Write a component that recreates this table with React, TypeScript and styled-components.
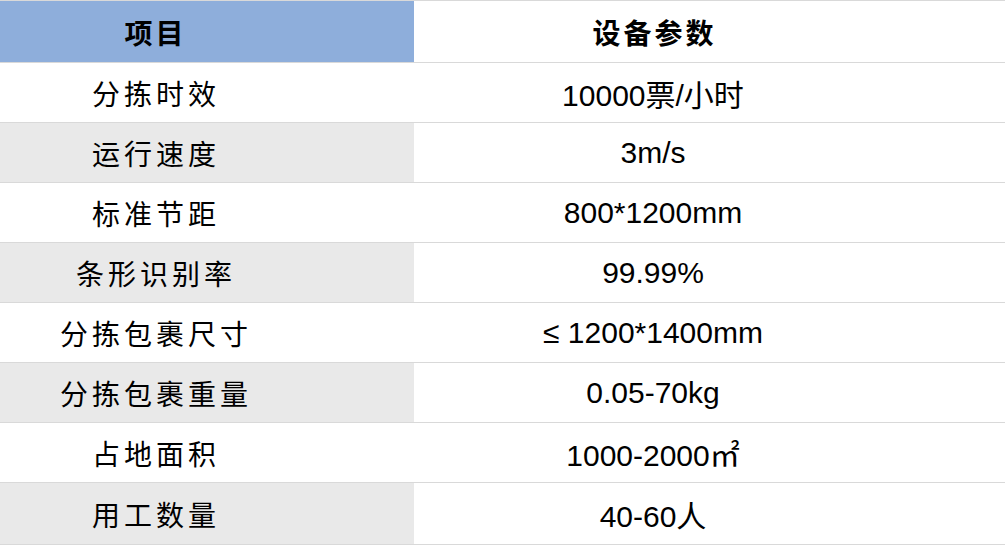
import React from "react";
import styled, { createGlobalStyle } from "styled-components";

const GlobalStyle = createGlobalStyle`
  html, body {
    margin: 0;
    padding: 0;
    background: #fff;
  }
  body {
    font-family: "Liberation Sans", "Noto Sans CJK SC", sans-serif;
    color: #000;
  }
`;

const Table = styled.div`
  width: 1005px;
  border-top: 1px solid #d9d9d9;
  display: flex;
  flex-direction: column;
`;

const Row = styled.div<{ $h: number }>`
  display: grid;
  grid-template-columns: 414px 1fr;
  height: ${(p) => p.$h}px;
  box-sizing: border-box;
  border-bottom: 1px solid #d9d9d9;
`;

// text in both columns sits left of the cell middle, as in the source sheet
const Label = styled.div<{ $bg: string; $head?: boolean }>`
  background: ${(p) => p.$bg};
  display: flex;
  align-items: center;
  justify-content: center;
  padding-right: 106px;
  font-family: "Noto Sans CJK SC", sans-serif;
  font-size: 28px;
  font-weight: ${(p) => (p.$head ? 700 : 400)};
  letter-spacing: ${(p) => (p.$head ? "3px" : "4px")};
  text-indent: ${(p) => (p.$head ? "3px" : "4px")};
`;

const Value = styled.div<{ $head?: boolean }>`
  background: #fff;
  display: flex;
  align-items: center;
  justify-content: center;
  padding-right: 113px;
  font-family: ${(p) =>
    p.$head
      ? `"Noto Sans CJK SC", sans-serif`
      : `"Liberation Sans", "Noto Sans CJK SC", sans-serif`};
  font-size: ${(p) => (p.$head ? 28 : 30)}px;
  font-weight: ${(p) => (p.$head ? 700 : 400)};
  letter-spacing: ${(p) => (p.$head ? "3px" : "0")};
  text-indent: ${(p) => (p.$head ? "3px" : "0")};
`;

const rows: [string, string][] = [
  ["分拣时效", "10000票/小时"],
  ["运行速度", "3m/s"],
  ["标准节距", "800*1200mm"],
  ["条形识别率", "99.99%"],
  ["分拣包裹尺寸", "≤ 1200*1400mm"],
  ["分拣包裹重量", "0.05-70kg"],
  ["占地面积", "1000-2000㎡"],
  ["用工数量", "40-60人"],
];

const App: React.FunctionComponent = () => (
  <>
    <GlobalStyle />
    <Table>
      <Row $h={62}>
        <Label $bg="#8eaedb" $head>
          项目
        </Label>
        <Value $head>设备参数</Value>
      </Row>
      {rows.map(([label, value], i) => (
        <Row key={label} $h={i === rows.length - 1 ? 62 : 60}>
          <Label $bg={i % 2 === 1 ? "#e9e9e9" : "#fff"}>{label}</Label>
          <Value>{value}</Value>
        </Row>
      ))}
    </Table>
  </>
);

export default App;
